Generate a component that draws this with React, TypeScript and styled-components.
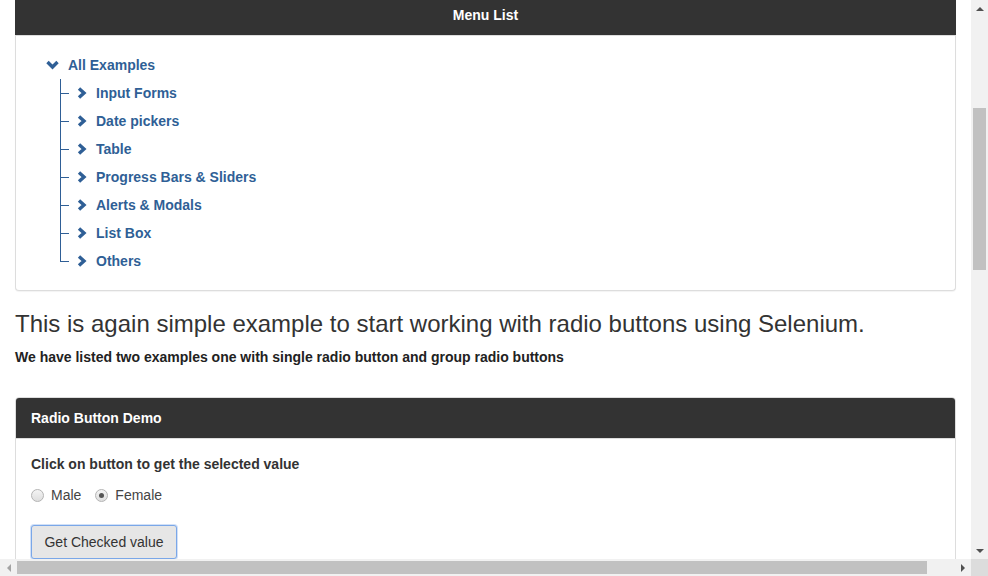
import React from "react";
import styled, { createGlobalStyle } from "styled-components";

const GlobalStyle = createGlobalStyle`
  html, body {
    margin: 0;
    padding: 0;
    background: #fff;
    font-family: "Liberation Sans", Arial, Helvetica, sans-serif;
    font-size: 14px;
    color: #333;
  }
`;

const menuItems = [
  "Input Forms",
  "Date pickers",
  "Table",
  "Progress Bars & Sliders",
  "Alerts & Modals",
  "List Box",
  "Others",
];

const ChevronRight = () => (
  <svg width="10" height="12" viewBox="0 0 10 12">
    <polyline
      points="2,1.5 7,6 2,10.5"
      fill="none"
      stroke="#2f5f96"
      strokeWidth="3.4"
      strokeLinejoin="miter"
    />
  </svg>
);

const ChevronDown = () => (
  <svg width="13" height="10" viewBox="0 0 13 10">
    <polyline
      points="1.5,2 6.5,7 11.5,2"
      fill="none"
      stroke="#2f5f96"
      strokeWidth="3.4"
      strokeLinejoin="miter"
    />
  </svg>
);

const Arrow = ({ dir }: { dir: "up" | "down" | "left" | "right" }) => {
  const pts = {
    up: "0,4 4,0 8,4",
    down: "0,0 8,0 4,4",
    left: "4,0 4,8 0,4",
    right: "0,0 4,4 0,8",
  }[dir];
  const vertical = dir === "up" || dir === "down";
  return (
    <svg width={vertical ? 8 : 4} height={vertical ? 4 : 8} viewBox={vertical ? "0 0 8 4" : "0 0 4 8"}>
      <polygon points={pts} fill={dir === "left" ? "#a3a3a3" : "#505050"} />
    </svg>
  );
};

const App: React.FC = () => {
  return (
    <Window>
      <GlobalStyle />
      <Main>
        <Panel>
          <PanelHeading center>Menu List</PanelHeading>
          <TreeBody>
            <TreeRow>
              <IconSlot wide>
                <ChevronDown />
              </IconSlot>
              <TreeLink>All Examples</TreeLink>
            </TreeRow>
            <ChildList>
              {menuItems.map((item, i) => (
                <ChildItem key={item} last={i === menuItems.length - 1}>
                  <IconSlot>
                    <ChevronRight />
                  </IconSlot>
                  <TreeLink>{item}</TreeLink>
                </ChildItem>
              ))}
            </ChildList>
          </TreeBody>
        </Panel>

        <Title>
          This is again simple example to start working with radio buttons using Selenium.
        </Title>
        <Lead>We have listed two examples one with single radio button and group radio buttons</Lead>

        <DemoPanel>
          <PanelHeading>Radio Button Demo</PanelHeading>
          <DemoBody>
            <Label>Click on button to get the selected value</Label>
            <RadioGroup>
              <RadioLabel>
                <Radio />
                Male
              </RadioLabel>
              <RadioLabel>
                <Radio checked />
                Female
              </RadioLabel>
            </RadioGroup>
            <Button>Get Checked value</Button>
          </DemoBody>
        </DemoPanel>
      </Main>

      <VScroll>
        <ArrowBox>
          <Arrow dir="up" />
        </ArrowBox>
        <VTrack>
          <VThumb />
        </VTrack>
        <ArrowBox>
          <Arrow dir="down" />
        </ArrowBox>
      </VScroll>

      <HScroll>
        <ArrowBox>
          <Arrow dir="left" />
        </ArrowBox>
        <HTrack>
          <HThumb />
        </HTrack>
        <ArrowBox>
          <Arrow dir="right" />
        </ArrowBox>
      </HScroll>
      <Corner />
    </Window>
  );
};

export default App;

const Window = styled.div`
  width: 988px;
  height: 576px;
  display: grid;
  grid-template-columns: 971px 17px;
  grid-template-rows: 559px 17px;
  overflow: hidden;
`;

const Main = styled.div`
  overflow: hidden;
  padding: 0 15px;
`;

const Panel = styled.div`
  border: 1px solid #ddd;
  border-top: none;
  border-radius: 0 0 4px 4px;
  background: #fff;
  box-shadow: 0 1px 1px rgba(0, 0, 0, 0.05);
`;

const PanelHeading = styled.div<{ center?: boolean }>`
  background: #333;
  color: #fff;
  font-weight: bold;
  font-size: 14px;
  line-height: 20px;
  text-align: ${({ center }) => (center ? "center" : "left")};
  padding: ${({ center }) => (center ? "5px 15px 10px" : "10px 15px 10px 16px")};
  border-bottom: 1px solid #ddd;
  margin: 0 -1px;
`;

const TreeBody = styled.div`
  padding: 15px 30px 15px;
`;

const TreeRow = styled.div`
  display: flex;
  align-items: center;
  height: 28px;
`;

const IconSlot = styled.span<{ wide?: boolean }>`
  display: inline-flex;
  align-items: center;
  width: ${({ wide }) => (wide ? "22px" : "19px")};
  svg {
    display: block;
  }
`;

const TreeLink = styled.span`
  color: #2f5f96;
  font-weight: bold;
  font-size: 14px;
`;

const ChildList = styled.ul`
  list-style: none;
  margin: 0 0 0 14px;
  padding: 0;
`;

const ChildItem = styled.li<{ last?: boolean }>`
  position: relative;
  display: flex;
  align-items: center;
  height: 28px;
  padding-left: 17px;

  &::before {
    content: "";
    position: absolute;
    left: 0;
    top: 0;
    height: ${({ last }) => (last ? "14px" : "28px")};
    border-left: 1px solid #2f5f96;
  }

  &::after {
    content: "";
    position: absolute;
    left: 0;
    top: 14px;
    width: 9px;
    border-top: 1px solid #2f5f96;
  }
`;

const Title = styled.h3`
  margin: 20px 0 10px;
  font-size: 24px;
  font-weight: normal;
  line-height: 26px;
  color: #333;
`;

const Lead = styled.p`
  margin: 0;
  font-weight: bold;
  font-size: 14px;
  line-height: 20px;
  color: #222;
`;

const DemoPanel = styled.div`
  margin-top: 30px;
  border: 1px solid #ddd;
  border-radius: 4px;
  overflow: hidden;
  background: #fff;
`;

const DemoBody = styled.div`
  padding: 15px 15px 20px;
`;

const Label = styled.div`
  font-weight: bold;
  line-height: 20px;
  color: #333;
`;

const RadioGroup = styled.div`
  display: flex;
  gap: 14px;
  margin-top: 11px;
  height: 20px;
  align-items: center;
`;

const RadioLabel = styled.label`
  display: flex;
  align-items: center;
  gap: 7px;
  color: #444;
  font-size: 14px;
`;

const Radio = styled.span<{ checked?: boolean }>`
  position: relative;
  width: 11px;
  height: 11px;
  border-radius: 50%;
  border: 1px solid #b4b4b4;
  background: linear-gradient(#f4f4f4, #dedede);

  &::after {
    content: "";
    display: ${({ checked }) => (checked ? "block" : "none")};
    position: absolute;
    left: 3px;
    top: 3px;
    width: 5px;
    height: 5px;
    border-radius: 50%;
    background: #555;
  }
`;

const Button = styled.button`
  display: block;
  margin-top: 20px;
  width: 146px;
  height: 34px;
  padding: 6px 12px;
  font-family: "Liberation Sans", Arial, sans-serif;
  font-size: 14px;
  color: #333;
  background: #e6e6e6;
  border: 1px solid #7aa7e8;
  border-radius: 3px;
  box-shadow: 0 0 0 1px rgba(122, 167, 232, 0.35);
`;

const VScroll = styled.div`
  display: flex;
  flex-direction: column;
  background: #f1f1f1;
`;

const HScroll = styled.div`
  display: flex;
  background: #f1f1f1;
`;

const ArrowBox = styled.div`
  width: 17px;
  height: 17px;
  flex: none;
  display: flex;
  align-items: center;
  justify-content: center;
`;

const VTrack = styled.div`
  flex: 1;
  display: flex;
  justify-content: center;
`;

const VThumb = styled.div`
  width: 13px;
  height: 162px;
  margin-top: 91px;
  background: #c1c1c1;
`;

const HTrack = styled.div`
  flex: 1;
  display: flex;
  align-items: center;
`;

const HThumb = styled.div`
  width: 910px;
  height: 13px;
  background: #c1c1c1;
`;

const Corner = styled.div`
  background: #dcdcdc;
`;
